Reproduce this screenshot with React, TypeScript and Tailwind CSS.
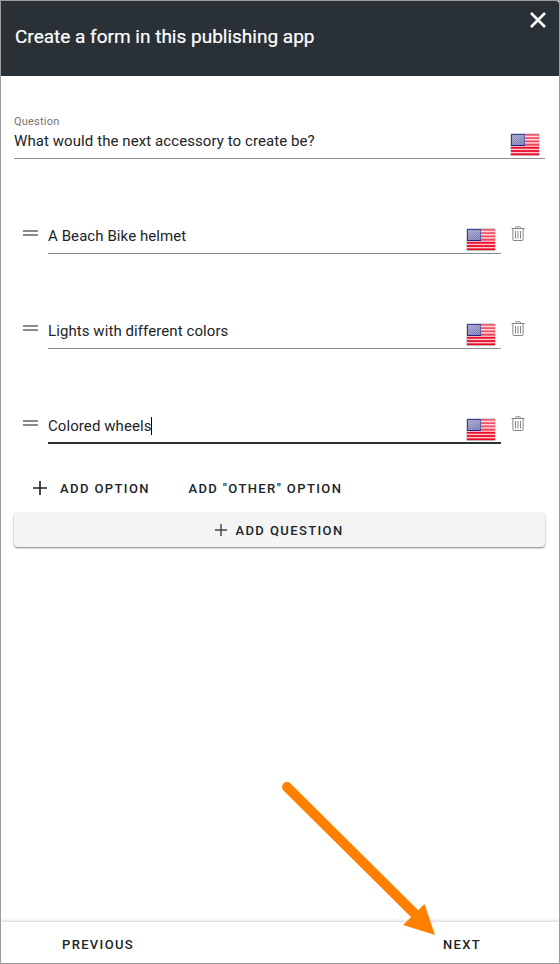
import React from "react";

const STRIPES = [0, 1, 2, 3, 4, 5, 6];

function Flag() {
  return (
    <svg width="32" height="25" viewBox="0 0 32 25" className="shrink-0" aria-label="English (US)">
      <defs>
        <linearGradient id="sheen" x1="0" y1="0" x2="0" y2="1">
          <stop offset="0" stopColor="#fff" stopOpacity="0.34" />
          <stop offset="1" stopColor="#fff" stopOpacity="0.24" />
        </linearGradient>
        <linearGradient id="canton" x1="0" y1="0" x2="1" y2="1">
          <stop offset="0" stopColor="#7474b2" />
          <stop offset="1" stopColor="#4c4c98" />
        </linearGradient>
        <pattern id="stars" width="2" height="2" patternUnits="userSpaceOnUse">
          <rect width="1" height="1" fill="#fff" fillOpacity="0.22" />
          <rect x="1" y="1" width="1" height="1" fill="#fff" fillOpacity="0.14" />
        </pattern>
      </defs>
      <rect x="1" y="1" width="30" height="23" rx="1.5" fill="#000" fillOpacity="0.1" />
      <rect x="1.5" y="1.5" width="29" height="22.5" rx="1" fill="#000" fillOpacity="0.12" />
      <rect x="2" y="2" width="28" height="21" fill="#ffc4ca" />
      {STRIPES.map((i) => (
        <rect key={i} x="2" y={2 + i * 3.23} width="28" height="1.75" fill="#e60a26" />
      ))}
      <rect x="2" y="2" width="14" height="12" fill="#242487" />
      <rect x="3" y="3" width="12" height="10" fill="url(#canton)" />
      <rect x="3" y="3" width="12" height="10" fill="url(#stars)" />
      <rect x="2" y="2" width="28" height="11" fill="url(#sheen)" />
      <path d="M2.5 14V2.5H16" fill="none" stroke="#34348f" strokeOpacity="0.8" />
    </svg>
  );
}

function Trash() {
  return (
    <svg width="14" height="16" viewBox="0 0 14 16" fill="none" stroke="#858585" className="shrink-0">
      <path d="M0.5 2.5H13.5M4.5 2.5V1.8Q4.5 0.7 5.6 0.7H8.4Q9.5 0.7 9.5 1.8V2.5" />
      <path d="M1.9 2.5V13.6Q1.9 14.5 2.8 14.5H11.2Q12.1 14.5 12.1 13.6V2.5" />
      <path d="M4.5 5V12.5M7 5V12.5M9.5 5V12.5" />
    </svg>
  );
}

function Plus({ size, color }: { size: number; color: string }) {
  return (
    <svg width={size} height={size} viewBox="0 0 14 14" stroke={color} strokeWidth="1.7" className="shrink-0">
      <path d="M7 0V14M0 7H14" />
    </svg>
  );
}

function Option({ text, active = false }: { text: string; active?: boolean }) {
  return (
    <div className="flex h-[95px] pt-[65px]">
      <div className="ml-[9px] mt-[6px] h-[6px] w-[15px] border-y-2 border-[#8b8b8b]" />
      <div
        className={`ml-[10px] flex h-[30px] w-[453px] justify-between pr-[4.5px] ${
          active ? "border-b-2 border-[#293136]" : "border-b border-[#8c8c8c]"
        }`}
      >
        <span className="flex h-6 items-center text-[15px] tracking-[0.08px]">
          {text}
          {active && <span className="-ml-px h-[18px] w-px bg-black" />}
        </span>
        <span className="mt-[3px]"><Flag /></span>
      </div>
      <div className="ml-[10px] mt-[2px]"><Trash /></div>
    </div>
  );
}

export default function App() {
  return (
    <div className="relative flex h-[964px] w-[560px] flex-col overflow-hidden border border-[#9c9c9c] bg-white font-['Roboto',sans-serif] text-[#202427]">
      <header className="flex h-[75px] shrink-0 justify-between rounded-tr-[3px] bg-[#293136] text-white">
        <h1 className="ml-[14px] mt-[24px] text-[19px] font-normal leading-6 [-webkit-text-stroke:0.2px_white]">Create a form in this publishing app</h1>
        <svg width="16" height="16" viewBox="0 0 16 16" className="mr-[13px] mt-[11px]" stroke="#fff" strokeWidth="2.6">
          <path d="M1 1L15 15M15 1L1 15" />
        </svg>
      </header>

      <main className="flex grow flex-col px-[13px]">
        <div className="mt-[38px] h-[15px] text-[11px] leading-4 tracking-[0.22px] text-[#747474]">Question</div>
        <div className="flex h-[30px] w-[531px] justify-between border-b border-[#8c8c8c] pr-1">
          <span className="text-[15px] leading-6 tracking-[0.08px]">What would the next accessory to create be?</span>
          <span className="mt-[3px]"><Flag /></span>
        </div>

        <Option text="A Beach Bike helmet" />
        <Option text="Lights with different colors" />
        <Option text="Colored wheels" active />

        <div className="flex h-[69px] items-center pt-5 text-[13px] font-medium tracking-[1.4px]">
          <span className="ml-[19px] mr-[13px] -mt-0.5"><Plus size={14} color="#252a2d" /></span>
          <span>ADD OPTION</span>
          <span className="ml-[38.5px]">ADD "OTHER" OPTION</span>
        </div>

        <button className="flex h-[34px] w-[531px] shrink-0 items-center justify-center gap-2 rounded bg-[#f4f4f4] pt-0.5 text-[13px] font-medium tracking-[1.4px] shadow-[0_1px_2px_rgba(0,0,0,0.5)]">
          <span className="-mt-0.5"><Plus size={12} color="#444" /></span>
          ADD QUESTION
        </button>
      </main>

      <footer className="flex h-[41px] shrink-0 items-center justify-between pl-[61px] pr-[78px] pt-1 text-[13px] font-medium tracking-[1.35px] shadow-[0_0_4px_rgba(0,0,0,0.3)]">
        <span>PREVIOUS</span>
        <span>NEXT</span>
      </footer>

      <svg className="absolute left-[279px] top-[779px]" width="160" height="160" viewBox="0 0 160 160">
        <path d="M7 7L137 136" stroke="#ff8000" strokeWidth="10" strokeLinecap="round" />
        <path d="M144.5 124L155 155L123 145Z" fill="#ff8000" />
      </svg>
    </div>
  );
}
